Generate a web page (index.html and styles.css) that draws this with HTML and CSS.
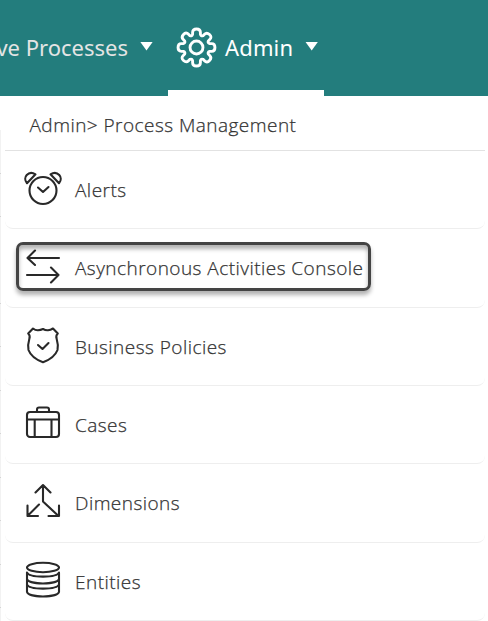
FILE: index.html
```html
<!DOCTYPE html>
<html lang="en">
<head>
  <meta charset="UTF-8">
  <meta name="viewport" content="width=device-width, initial-scale=1.0">
  <title>Process Management</title>
  <link rel="stylesheet" href="styles.css">
</head>
<body>
  <nav class="navbar">
    <a class="nav-item processes"><span class="processes-text">ve Processes</span><span class="caret"></span></a>
    <a class="nav-item active">
      <svg class="gear" viewBox="0 0 40 40">
        <path d="M16.2 7.1 V5.2 Q16.2 2 20 2 T23.8 5.2 V7.1 Q24.3 9.3 26.4 8.5 L27.8 7.1 Q30 4.8 32.7 7.3 T32.9 12.2 L31.5 13.6 Q30.7 15.7 32.9 16.2 H34.8 Q38 16.2 38 20 T34.8 23.8 H32.9 Q30.7 24.3 31.5 26.4 L32.9 27.8 Q35.2 30 32.7 32.7 T27.8 32.9 L26.4 31.5 Q24.3 30.7 23.8 32.9 V34.8 Q23.8 38 20 38 T16.2 34.8 V32.9 Q15.7 30.7 13.6 31.5 L12.2 32.9 Q10 35.2 7.3 32.7 T7.1 27.8 L8.5 26.4 Q9.3 24.3 7.1 23.8 H5.2 Q2 23.8 2 20 T5.2 16.2 H7.1 Q9.3 15.7 8.5 13.6 L7.1 12.2 Q4.8 10 7.3 7.3 T12.2 7.1 L13.6 8.5 Q15.7 9.3 16.2 7.1 Z"/>
        <circle cx="20" cy="20" r="6.3"/>
      </svg>
      <span class="admin-text">Admin</span><span class="caret"></span>
    </a>
  </nav>

  <main class="panel">
    <h1 class="breadcrumb">Admin&gt; Process Management</h1>
    <ul class="menu">
      <li class="menu-item">
        <svg class="icon" viewBox="0 0 40 40">
          <circle cx="20" cy="22.5" r="13.5"/>
          <path d="M15 19.500l5 4.500 5.500-5M4 15.200C-1 9.500 5.500 2 12.500 6.300zM36 15.200C41 9.500 34.500 2 27.500 6.300z"/>
        </svg>
        <span>Alerts</span>
      </li>
      <li class="menu-item selected">
        <svg class="icon" viewBox="0 0 40 40">
          <path d="M36 12H4.500M12 4.500L4.500 12l7.500 7M4 29h31.500M28 21.500l7.500 7.500L28 36.500"/>
        </svg>
        <span>Asynchronous Activities Console</span>
      </li>
      <li class="menu-item">
        <svg class="icon" viewBox="0 0 40 40">
          <path d="M10 3.500Q12.500 5.500 15 5.300T20 4Q22.500 5.500 25 5.300T30 3.500L34.800 8.500Q32.500 10.500 33.700 14Q35.500 20 34.500 25Q31.500 33 20 37.300Q8.500 33 5.500 25Q4.500 20 6.300 14Q7.500 10.500 5.200 8.500ZM15 20l4.500 4 6-6"/>
        </svg>
        <span>Business Policies</span>
      </li>
      <li class="menu-item">
        <svg class="icon" viewBox="0 0 40 40">
          <rect x="4" y="9" width="32" height="25" rx="3"/>
          <path d="M4 16.500h32M11.700 16.500V34M28.500 16.500V34M14 9V6.500Q14 4.500 16 4.500H24Q26 4.500 26 6.500V9"/>
        </svg>
        <span>Cases</span>
      </li>
      <li class="menu-item">
        <svg class="icon" viewBox="0 0 40 40">
          <path d="M12.500 11.500L20 4l7.500 7.500M20 4v16.500l15.500 14.500M36 24.500V35H25.500M4.500 24.500V35H15M4.500 35L16 23.500"/>
        </svg>
        <span>Dimensions</span>
      </li>
      <li class="menu-item">
        <svg class="icon" viewBox="0 0 40 40">
          <ellipse cx="20" cy="7.500" rx="16" ry="4.700"/>
          <path d="M4 12.500v6.500C6 25 34 25 36 19V12.500C34 18 6 18 4 12.500zM4 24.500v7.500C6 38 34 38 36 32V24.500C34 30 6 30 4 24.500zM4 18.500v6M36 18.500v6"/>
        </svg>
        <span>Entities</span>
      </li>
    </ul>
  </main>
</body>
</html>
```

FILE: styles.css
```css
*, *::after {
  box-sizing: border-box;
}
body {
  margin: 0;
  height: 621px;
  overflow: hidden;
  background: #fff;
  color: #333;
  font-family: "Open Sans", "Noto Sans", sans-serif;
}
.navbar {
  display: flex;
  height: 96px;
  background: #237d7d;
  color: #fff;
  font-family: "Noto Sans", "Open Sans", sans-serif;
  font-size: 22px;
}
.nav-item {
  display: flex;
  align-items: center;
  height: 96px;
}
.processes {
  width: 168px;
  justify-content: flex-end;
  padding-right: 15px;
  white-space: nowrap;
}
.processes-text {
  margin-top: -2px;
  color: #e4e4e4;
}
.active {
  width: 156px;
  padding: 6px 0 0 8px;
  border-bottom: 6px solid #fff;
}
.admin-text {
  margin-top: -2px;
  letter-spacing: 0.15px;
}
.caret {
  flex: none;
  width: 13px;
  height: 9px;
  margin: -4px 0 0 12px;
  background: #fff;
  clip-path: polygon(0 0, 100% 0, 50% 100%);
}
.gear {
  width: 41px;
  height: 41px;
  margin: -1px 8px 0 0;
  fill: none;
  stroke: #fff;
  stroke-width: 2.8;
}
.panel {
  height: 525px;
  padding: 0 3px 0 5px;
  /* thin left edge with row ticks */
  background: repeating-linear-gradient(#f2f2f2 0 42.5px, #d4d4d4 42.5px 43.5px) 0 34px / 1px 100% no-repeat;
}
.breadcrumb {
  height: 55px;
  margin: 0;
  padding-left: 24.5px;
  border-bottom: 1px solid #e2e2e2;
  font-size: 19px;
  font-weight: 300;
  letter-spacing: 0.46px;
  line-height: 58px;
  -webkit-text-stroke: 0.25px #333;
}
.menu {
  margin: 0;
  padding: 0;
  list-style: none;
}
.menu-item {
  display: flex;
  align-items: center;
  gap: 12px;
  height: 78.33px;
  padding-left: 18px;
  border-bottom: 1px solid #eee;
  border-radius: 8px;
  font-size: 19px;
  font-weight: 300;
  letter-spacing: 0.46px;
  -webkit-text-stroke: 0.25px #333;
}
.menu-item:nth-child(3n) span {
  padding-top: 1px;
}
.icon {
  width: 40px;
  height: 40px;
  margin-top: -3px;
  fill: none;
  stroke: #292929;
  stroke-width: 2.1;
  stroke-linecap: round;
  stroke-linejoin: round;
}
.selected {
  position: relative;
}
/* highlight frame around the selected entry */
.selected::after {
  content: "";
  position: absolute;
  left: 11px;
  top: 13px;
  width: 355px;
  height: 49px;
  border: 3px solid #444;
  border-radius: 7px;
  box-shadow: 0 4px 4px rgba(0, 0, 0, 0.3), inset 0 4px 4px rgba(0, 0, 0, 0.3);
}
```
